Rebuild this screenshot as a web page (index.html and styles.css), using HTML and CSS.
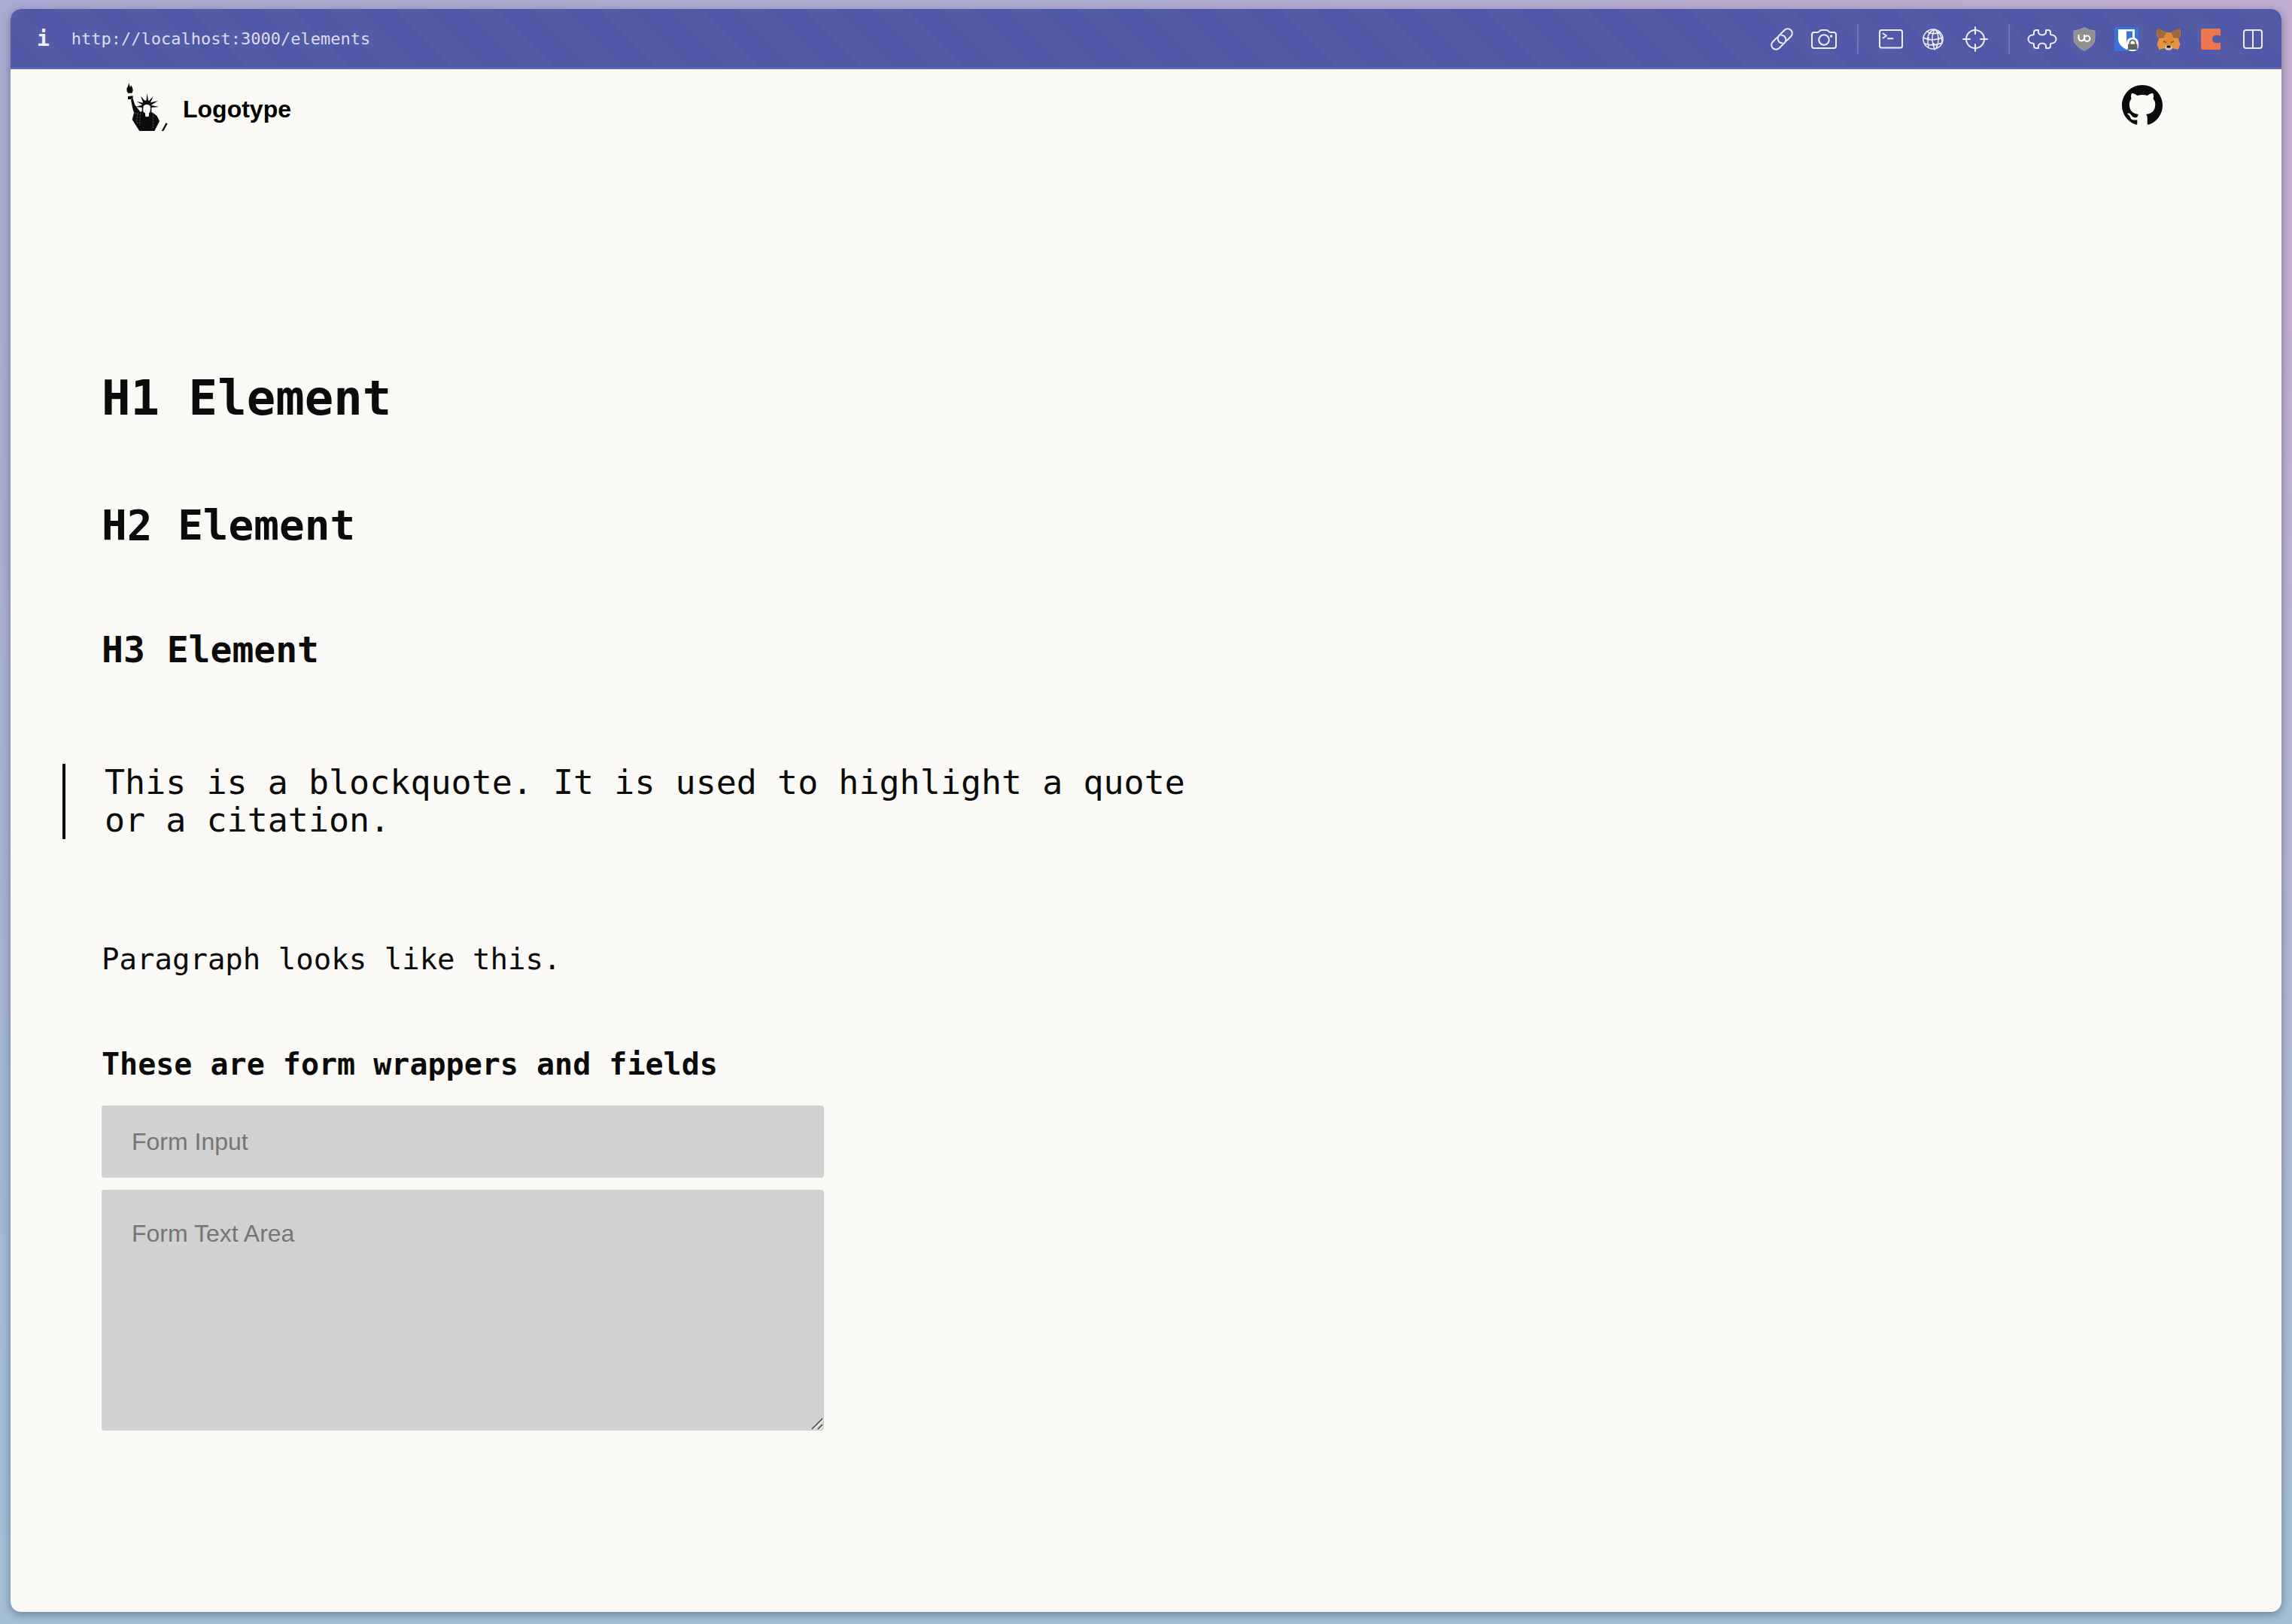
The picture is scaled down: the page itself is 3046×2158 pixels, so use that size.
FILE: index.html
```html
<!DOCTYPE html>
<html lang="en">
<head>
<meta charset="utf-8">
<meta name="viewport" content="width=device-width, initial-scale=1">
<title>Elements</title>
<link rel="stylesheet" href="styles.css">
</head>
<body>
<div class="window">
  <div class="toolbar">
    <button class="info" type="button" aria-label="Site information">i</button>
    <input class="address" type="text" aria-label="Address" value="http://localhost:3000/elements" readonly>
    <div class="tools">
      <button class="tool" type="button" aria-label="Copy link"><svg viewBox="0 0 40 40"><g transform="translate(20 20) rotate(-45)" class="line"><path d="M-3-6H-11A6 6 0 0 0-11 6H-1A6 6 0 0 0 3.500-4"/><path d="M3 6H11A6 6 0 0 0 11-6H1A6 6 0 0 0-3.500 4"/></g></svg></button>
      <button class="tool" type="button" aria-label="Capture"><svg viewBox="0 0 40 40"><g class="line"><path d="M7 11H11Q13 11 14 9.500Q15 8 17 8H23Q25 8 26 9.500Q27 11 29 11H33Q36 11 36 14V29Q36 32 33 32H7Q4 32 4 29V14Q4 11 7 11Z"/><circle cx="20" cy="21" r="6.800"/></g><circle cx="29.700" cy="16" r="1.700" class="fill"/></svg></button>
      <span class="divider"></span>
      <button class="tool" type="button" aria-label="Console"><svg viewBox="0 0 40 40"><g class="line"><rect x="5" y="8" width="30" height="23.500" rx="2.500"/><path d="M9.500 12.500L14 15.500L9.500 18.500M16 19.300H22.500"/></g></svg></button>
      <button class="tool" type="button" aria-label="Network"><svg viewBox="0 0 40 40"><g class="line thin"><circle cx="20" cy="20" r="13"/><path d="M22 7Q13 11 13 19T14 31M22 7Q17 17 20 27T22 33M22 7Q27 11 27 19T24 32M24 8Q32 14 32 24M12 10Q20 15 29 10.500M7 18Q18 24 33 17.500M9 26Q20 30 32 25"/></g><circle cx="13.500" cy="18.500" r="1.600" class="fill"/><circle cx="20.500" cy="27" r="1.900" class="fill"/><circle cx="27" cy="19.500" r="1.600" class="fill"/></svg></button>
      <button class="tool" type="button" aria-label="Inspect"><svg viewBox="0 0 40 40"><g class="line"><circle cx="20" cy="20" r="12"/><path d="M20 4V13M20 27V36M4 20H13M27 20H36"/></g></svg></button>
      <span class="divider"></span>
      <button class="tool" type="button" aria-label="Extensions"><svg viewBox="0 0 40 40"><path class="line" d="M15 8C14 13 17 14.500 20 14.500S26 13 25 8H28Q31 8 31 11V13Q31 14.500 33 14.500A5.500 5.500 0 0 1 33 25.500Q31 25.500 31 27V29Q31 32 28 32H25C26 27 23 25.500 20 25.500S14 27 15 32H12Q9 32 9 29V27Q9 25.500 7 25.500A5.500 5.500 0 0 1 7 14.500Q9 14.500 9 13V11Q9 8 12 8Z"/></svg></button>
      <button class="tool" type="button" aria-label="Content blocker"><svg viewBox="0 0 40 40"><path fill="#909090" stroke="#a0a0a4" d="M20 4.500Q26 8.500 34 9V20Q34 28 20 35.500Q6 28 6 20V9Q14 8.500 20 4.500Z"/><path fill="none" stroke="#fff" stroke-width="2" d="M12.500 14V19A3.800 3.800 0 0 0 20 19V14"/><circle cx="23.700" cy="19.200" r="3.700" fill="none" stroke="#fff" stroke-width="2"/></svg></button>
      <button class="tool" type="button" aria-label="Password manager"><svg viewBox="0 0 40 40"><rect x="4" y="4" width="32" height="32" rx="2" fill="#3873dc"/><path fill="#fff" d="M9 7H31V20Q31 28 20 34Q9 28 9 20Z"/><path fill="#3873dc" d="M20 9.500H28V20Q27 26 20 30Z"/><rect x="20" y="18" width="16" height="18" rx="7" fill="#fff"/><rect x="22" y="26.500" width="12.500" height="7.500" fill="#616161"/><path fill="none" stroke="#616161" stroke-width="1.800" d="M24.500 27V24.500A3.800 3.800 0 0 1 32 24.500V27"/></svg></button>
      <button class="tool" type="button" aria-label="Wallet"><svg viewBox="0 0 40 40"><path fill="#e8943e" d="M5 6L17 11H23L35 6L36 14L33 20L35.500 27L32.500 34L25 32L22.500 34.500H17.500L15 32L7.500 34L4.500 27L7 20L4 14Z"/><path fill="#a4693a" d="M5 5L17 11L13.500 18.500L6 19L4.500 13ZM35 5L23 11L26.500 18.500L34 19L35.500 13Z"/><path fill="#e08a38" d="M17 11H23L26 20L24 28H16L14 20Z"/><path fill="#6d4c3c" d="M13 22L17 24L16.500 25L13 24ZM27 22L23 24L23.500 25L27 24Z"/><path fill="#d6c5b8" d="M16.500 28L23.500 28L25.500 32L22.500 34.500H17.500L14.500 32Z"/><path fill="#181515" d="M17.500 28.500H22.500V31.500H17.500Z"/></svg></button>
      <button class="tool" type="button" aria-label="Clipper"><svg viewBox="0 0 40 40"><path fill="#ee7752" d="M9 6H31Q33 6 33 8V15.500Q22 13 22 20T33 24.500V32Q33 34 31 34H9Q7 34 7 32V8Q7 6 9 6Z"/></svg></button>
      <button class="tool" type="button" aria-label="Split view"><svg viewBox="0 0 40 40"><g class="line"><rect x="8" y="8" width="24" height="24" rx="3"/><path d="M20 8V32"/></g></svg></button>
    </div>
  </div>

  <header class="site-header">
    <a class="brand" href="#">
      <svg class="brand-mark" viewBox="24 18 165 192" aria-hidden="true"><g fill="#0b0b0b"><path d="M34 18Q36 28 39 36L42 28Q50 38 50 46Q50 54 46 59H30Q24 51 25 41Q31 33 34 18Z"/><path d="M30 72L50 70L50 80L40 84L30 84Z"/><path d="M42 84L50 81L58 106L76 130L80 134Q88 134 90 124L87 106Q104 90 122 106L121 126Q122 138 130 137L146 151L156 171L136 210H76L47 165L54 137Q47 118 42 84Z"/><path d="M86 112Q86 88 105 88Q124 88 124 112V134H86Z"/><path d="M103 94L106 60L112 92L131 71L120 97L150 90L122 107L153 114L121 117L104 94L88 117L61 114L88 106L64 92L91 98L81 71L100 92Z"/><path d="M182 178L188 181L172 210H164Z"/></g><path fill="#fbfaf6" d="M92 110Q105 99 119 110Q121 122 118 136L114 139V151Q106 157 99 151V139L92 135Q89 121 92 110Z"/><path fill="none" stroke="#aaa" stroke-width="1.500" stroke-dasharray="7 4" d="M55 137Q65 144 75 135M70 142Q64 160 67 180M80 140Q76 166 78 188M130 138V198"/></svg>
      <span>Logotype</span>
    </a>
    <a class="github" href="#" aria-label="GitHub"><svg viewBox="0 0 16 16" fill="#0b0b0b"><path d="M8 0C3.580 0 0 3.580 0 8c0 3.540 2.290 6.530 5.470 7.590.4.070.55-.17.55-.38 0-.19-.01-.82-.01-1.490-2.010.37-2.530-.49-2.690-.94-.09-.23-.48-.94-.82-1.130-.28-.15-.68-.52-.01-.53.63-.01 1.080.58 1.230.82.72 1.210 1.870.87 2.330.66.07-.52.28-.87.51-1.070-1.780-.2-3.640-.89-3.640-3.950 0-.87.31-1.590.82-2.150-.08-.2-.36-1.020.08-2.120 0 0 .67-.21 2.200.82.64-.18 1.320-.27 2-.27s1.360.09 2 .27c1.530-1.040 2.200-.82 2.200-.82.44 1.100.16 1.920.08 2.120.51.56.82 1.270.82 2.150 0 3.070-1.870 3.750-3.650 3.950.29.25.54.73.54 1.480 0 1.070-.01 1.930-.01 2.200 0 .21.15.46.55.38A8.010 8.010 0 0 0 16 8c0-4.420-3.580-8-8-8z"/></svg></a>
  </header>

  <main class="content">
    <h1>H1 Element</h1>
    <h2>H2 Element</h2>
    <h3>H3 Element</h3>
    <blockquote>This is a blockquote. It is used to highlight a quote or a citation.</blockquote>
    <p>Paragraph looks like this.</p>
    <h4>These are form wrappers and fields</h4>
    <form class="form">
      <input class="field" type="text" placeholder="Form Input" aria-label="Form Input">
      <div class="area">
        <textarea class="field field-area" placeholder="Form Text Area" aria-label="Form Text Area"></textarea>
        <svg class="grip" viewBox="0 0 16 16" aria-hidden="true"><path stroke="#eee" d="M3 16L16 3M11 16L16 11"/><path stroke="#444" d="M1 15L15 1M9 15L15 9"/></svg>
      </div>
    </form>
  </main>
</div>
</body>
</html>
```
FILE: styles.css
```css
* {
  box-sizing: border-box;
}

body {
  margin: 0;
  min-height: 100vh;
  padding: 12px 14px 16px;
  display: flex;
  color: #0b0b0b;
  font-family: "DejaVu Sans Mono", monospace;
  background:
    linear-gradient(to bottom, rgba(163, 190, 214, 0) 20%, #a3bed6 95%),
    linear-gradient(to right, #a9acd2, #b0add2 50%, #c0add0);
}

.window {
  flex: 1;
  min-width: 0;
  border-radius: 14px;
  overflow: hidden;
  background: #fbfaf6;
  box-shadow: 0 3px 12px rgba(20, 30, 60, 0.4);
}

.toolbar {
  height: 80px;
  padding: 2px 18px 0 35px;
  display: flex;
  align-items: center;
  border-bottom: 2px solid #6369b3;
  background: repeating-linear-gradient(45deg, #5158a7 0 32px, #555ca7 32px 64px);
}

.info,
.tool {
  border: 0;
  padding: 0;
  background: none;
  color: #eeeefa;
}

.info {
  font: bold 28px/40px "DejaVu Sans Mono", monospace;
}

.address {
  flex: 1;
  min-width: 0;
  margin: 0 29px;
  padding: 0;
  border: 0;
  background: none;
  color: #dcdcf2;
  font: 22px/40px "DejaVu Sans Mono", monospace;
}

.tools {
  display: flex;
  align-items: center;
  gap: 16px;
}

.tool {
  width: 40px;
  height: 40px;
}

.tool svg,
.github svg {
  display: block;
  width: 100%;
}

.line {
  fill: none;
  stroke: #eeeefa;
  stroke-width: 2;
  stroke-linecap: round;
  stroke-linejoin: round;
}

.thin {
  stroke-width: 1.5;
}

.fill {
  fill: #eeeefa;
}

.divider {
  width: 2px;
  height: 40px;
  margin: 0 7px 0 8px;
  background: #7076c0;
}

.site-header {
  padding: 18px 158px 0 154px;
  display: flex;
  justify-content: space-between;
  align-items: flex-start;
}

.brand {
  display: flex;
  align-items: center;
  gap: 20px;
  color: #000;
  font: bold 32px/40px "Liberation Sans", Arial, sans-serif;
  text-decoration: none;
}

.brand span {
  padding-top: 6px;
}

.brand-mark {
  width: 55px;
  height: 64px;
}

.github {
  width: 54px;
  padding-top: 3px;
}

.content {
  padding: 315px 121px 120px;
}

h1,
h2,
h3,
h4,
p,
blockquote {
  margin: 0;
}

h1 {
  font-size: 64px;
  line-height: 80px;
  margin-bottom: 94px;
}

h2 {
  font-size: 56px;
  line-height: 70px;
  margin-bottom: 100px;
}

h3 {
  font-size: 48px;
  line-height: 60px;
  margin-bottom: 122px;
}

blockquote {
  max-width: 1540px;
  margin: 0 0 135px -52px;
  padding-left: 52px;
  border-left: 4px solid #0b0b0b;
  font-size: 45px;
  line-height: 50px;
}

p {
  font-size: 39px;
  line-height: 50px;
  margin-bottom: 89px;
}

h4 {
  font-size: 40px;
  line-height: 50px;
  margin-bottom: 30px;
}

.form {
  max-width: 960px;
  display: grid;
  gap: 16px;
}

.area {
  position: relative;
}

.field {
  display: block;
  width: 100%;
  height: 96px;
  padding: 0 40px;
  border: 0;
  border-radius: 4px;
  background: #d1d1d1;
  font: 32px "Liberation Sans", Arial, sans-serif;
}

.field::placeholder {
  color: #757575;
}

.field-area {
  height: 320px;
  padding: 40px;
  resize: none;
}

.grip {
  position: absolute;
  right: 1px;
  bottom: 1px;
  width: 16px;
  height: 16px;
  fill: none;
  stroke-width: 1.5;
  pointer-events: none;
}
```
